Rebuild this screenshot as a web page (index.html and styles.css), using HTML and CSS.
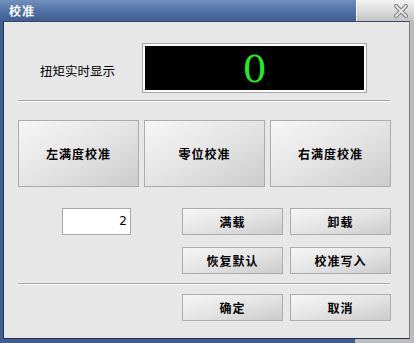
FILE: index.html
```html
<!DOCTYPE html>
<html lang="zh-CN">
<head>
<meta charset="utf-8">
<title>校准</title>
<link rel="stylesheet" href="styles.css">
</head>
<body>
<div class="window">
  <div class="titlebar">
    <div class="title-main"><span class="title-text">校准</span></div>
    <div class="title-close">
      <svg class="close-icon" width="14" height="14" viewBox="0 0 14 14">
        <path d="M2 2 L12 12 M12 2 L2 12" stroke="#7c7c7c" stroke-width="4" stroke-linecap="square"/>
        <path d="M2 2 L12 12 M12 2 L2 12" stroke="#e4e4e4" stroke-width="2" stroke-linecap="square"/>
      </svg>
    </div>
  </div>
  <div class="frame">
    <div class="client">
      <div class="row-display">
        <div class="label">扭矩实时显示</div>
        <div class="display"><span class="digit">0</span></div>
      </div>
      <div class="sep sep-1"></div>
      <div class="big-row">
        <button class="btn big">左满度校准</button>
        <button class="btn big">零位校准</button>
        <button class="btn big">右满度校准</button>
      </div>
      <div class="row row-input">
        <div class="input">2</div>
        <div class="spacer"></div>
        <button class="btn small">满载</button>
        <button class="btn small">卸载</button>
      </div>
      <div class="row row-2">
        <div class="spacer"></div>
        <button class="btn small">恢复默认</button>
        <button class="btn small">校准写入</button>
      </div>
      <div class="sep sep-2"></div>
      <div class="row row-bottom">
        <div class="spacer"></div>
        <button class="btn small">确定</button>
        <button class="btn small">取消</button>
      </div>
    </div>
  </div>
</div>
</body>
</html>
```

FILE: styles.css
```css
html, body {
  margin: 0;
  padding: 0;
  background: #e7e7e7;
}
body {
  font-family: "Noto Sans CJK SC", "Liberation Sans", sans-serif;
}
.window {
  width: 414px;
  height: 343px;
  display: flex;
  flex-direction: column;
  overflow: hidden;
}
.titlebar {
  height: 21px;
  display: flex;
  flex: none;
}
.title-main {
  flex: 1;
  background: linear-gradient(to bottom, #7390c0 0%, #5575a8 45%, #3e5e93 100%);
  display: flex;
  align-items: center;
  padding-left: 9px;
}
.title-text {
  color: #fff;
  font-size: 12px;
  font-weight: bold;
  letter-spacing: 1px;
  line-height: 21px;
}
.title-close {
  width: 57px;
  border-left: 1px solid #f8f8f8;
  background: linear-gradient(to bottom, #f4f4f4 0%, #dcdcdc 50%, #c2c2c2 100%);
  display: flex;
  justify-content: flex-end;
  align-items: flex-start;
}
.close-icon {
  display: block;
  margin: 4px 6px 0 0;
}
.frame {
  flex: 1;
  display: flex;
  padding: 0 4px 4px 3px;
  background: linear-gradient(to right, #3f5f94 355px, #bcbcbc 355px);
}
.client {
  flex: 1;
  background: #e7e7e7;
  border: 1px solid #22324e;
  border-right-color: #7a7a7a;
  border-top-color: #3a4a66;
  padding: 0 18px 0 14px;
  display: flex;
  flex-direction: column;
}
.row-display {
  margin-top: 21px;
  height: 50px;
  display: flex;
  align-items: center;
}
.label {
  flex: 1;
  padding-left: 22px;
  font-size: 12.5px;
  color: #000;
  padding-top: 4px;
}
.display {
  width: 223px;
  height: 48px;
  margin-right: 24px;
  border: 1px solid #a4a4a4;
  background: #000;
  box-shadow: inset 0 0 0 2px #fff;
  display: flex;
  align-items: center;
  justify-content: center;
}
.digit {
  font-family: "DejaVu Serif", "Liberation Serif", serif;
  font-size: 38px;
  line-height: 1;
  color: #20ee20;
  margin-top: 1px;
}
.sep {
  height: 0;
  border-top: 1px solid #a6a6a6;
  border-bottom: 1px solid #fafafa;
  margin-right: 1px;
}
.sep-1 { margin-top: 7px; }
.sep-2 { margin-top: 9px; }
.big-row {
  margin-top: 18px;
  display: flex;
  gap: 5px;
}
.btn {
  font-family: "Noto Sans CJK SC", "Liberation Sans", sans-serif;
  font-weight: bold;
  font-size: 12px;
  letter-spacing: 1px;
  color: #000;
  border: 1px solid #acacac;
  background: linear-gradient(to bottom right, #f6f6f6 0%, #e4e4e4 50%, #cbcbcb 100%);
  padding: 0;
  margin: 0;
  box-sizing: border-box;
  display: flex;
  align-items: center;
  justify-content: center;
}
.big {
  width: 121px;
  height: 67px;
}
.small {
  width: 101px;
  height: 27px;
}
.row {
  display: flex;
  gap: 7px;
  height: 27px;
}
.spacer { flex: 1; }
.row-input { margin-top: 21px; }
.row-2 { margin-top: 12px; }
.row-bottom { margin-top: 9px; }
.input {
  margin-left: 44px;
  width: 69px;
  height: 27px;
  box-sizing: border-box;
  background: #fff;
  border: 1px solid #a8a8a8;
  font-family: "DejaVu Sans", sans-serif;
  font-size: 12px;
  text-align: right;
  padding-right: 3px;
  line-height: 24px;
  color: #000;
}
```
